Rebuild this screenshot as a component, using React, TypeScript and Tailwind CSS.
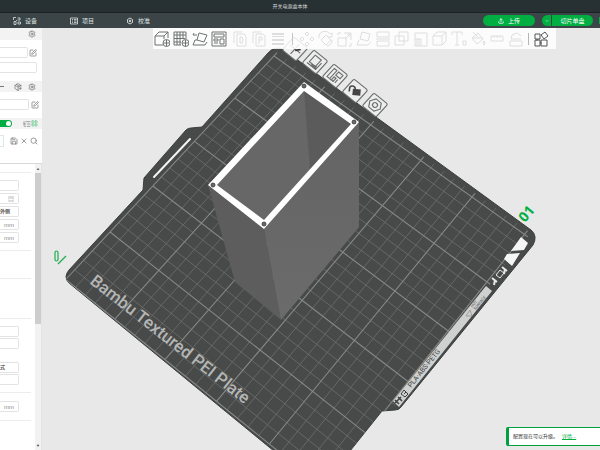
import React from "react";
import { Settings, Search, X, Save, SquarePen, ListTree, LayoutGrid, PackagePlus, Upload, ChevronDown } from "lucide-react";

const FONT = "font-['Liberation_Sans','Noto_Sans_CJK_SC',sans-serif]";

type Pt = [number, number];

// Projects plate millimetres (u along the front, v along the side) to the canvas.
// Anchors are the projected points (0,50) (150,50) (200,250) (0,250).
function solve(m: number[][]): number[] {
  const n = m.length;
  for (let i = 0; i < n; i++) {
    let p = i;
    for (let r = i; r < n; r++) if (Math.abs(m[r][i]) > Math.abs(m[p][i])) p = r;
    [m[i], m[p]] = [m[p], m[i]];
    for (let r = 0; r < n; r++) {
      if (r === i) continue;
      const f = m[r][i] / m[i][i];
      for (let c = i; c <= n; c++) m[r][c] -= f * m[i][c];
    }
  }
  return m.map((row, i) => row[n] / row[i]);
}

const anchors: [Pt, Pt][] = [
  [[0, 50], [110, 232]],
  [[150, 50], [260, 350]],
  [[200, 250], [472, 197]],
  [[0, 250], [274, 56]],
];
const H = solve(
  anchors.flatMap(([[u, v], [x, y]]) => [
    [u, v, 1, 0, 0, 0, -u * x, -v * x, x],
    [0, 0, 0, u, v, 1, -u * y, -v * y, y],
  ])
);
function project(u: number, v: number): Pt {
  const w = H[6] * u + H[7] * v + 1;
  return [(H[0] * u + H[1] * v + H[2]) / w, (H[3] * u + H[4] * v + H[5]) / w];
}
function segment(a: Pt, b: Pt) {
  const f = (p: Pt) => p.map((n) => n.toFixed(2)).join(" ");
  return `M${f(a)}L${f(b)}`;
}
const steps = Array.from({ length: 26 }, (_, i) => i * 10);
function gridPath(major: boolean) {
  return steps
    .filter((s) => (s % 50 === 0) === major)
    .map((s) => segment(project(s, 0), project(s, 254)) + segment(project(0, s), project(253, s)))
    .join("");
}

function PlateButton({ x, y, children }: { x: number; y: number; children: React.ReactNode }) {
  return (
    <g transform={`matrix(.86 .7 -.74 .8 ${x} ${y})`} fill="none" stroke="#6a6d6d" strokeWidth="1">
      <rect x="-8" y="-8" width="16" height="16" rx="1.5" fill="#ededed" />
      {children}
    </g>
  );
}

const PLATE =
  "M69 283Q63 277 69 270L143 190L144 178L186 130Q188 128 191 128L202 127L268 53Q275 45 284 50L531 230Q538 236 533 245L401 407Q399 410 395 410L382 411L346 456H280Z";

function Scene() {
  return (
    <svg
      className="absolute inset-0 h-full w-full"
      viewBox="42 28 558 422"
      preserveAspectRatio="xMinYMin slice"
      role="img"
      aria-label="Build plate"
    >
      <defs>
        <linearGradient id="right" x1="0" y1="0" x2="0" y2="1">
          <stop offset="0" stopColor="#646464" />
          <stop offset="1" stopColor="#6b6b6b" />
        </linearGradient>
        <clipPath id="plate">
          <path d={PLATE} />
        </clipPath>
      </defs>
      <path d={PLATE} fill="#484a49" stroke="#3c3e3e" strokeWidth="1" />
      <g clipPath="url(#plate)" fill="none">
        <path d={gridPath(false)} stroke="#6d706f" strokeWidth=".8" />
        <path d={gridPath(true)} stroke="#858887" strokeWidth="1.1" />
      </g>
      <path d="M154 177L190 139" stroke="#f4f4f4" strokeWidth="2" strokeLinecap="round" />

      <path d="M521 237L528 243L524 250L511 251Z" fill="#f5f5f5" />
      <path d="M507 254L520 253L512 266L504 259Z" fill="#f5f5f5" />
      <g stroke="#e8e8e8" fill="none">
        <path d="M492 278L497 282M495 280L494 285M502 267L507 271M505 269L504 274" strokeWidth="2" />
        <path d="M500 270L504 273L500 278L496 275Z" strokeWidth="1" />
      </g>
      <path d="M393 401L486 286L492 291L399 407Z" fill="#cfd1d0" />
      <path d="M395 400L399 404M398 397L402 401M395 403L401 397" stroke="#3f4141" strokeWidth="1.6" />
      <path d="M404 390L408 394L405 397L401 394ZM404 394L406 392" stroke="#3f4141" strokeWidth="1" fill="none" />
      <text
        transform="translate(411 388) rotate(-51)"
        fontSize="7"
        fill="#3d3f3f"
        fontFamily="Roboto, sans-serif"
      >
        PLA·ABS·PETG
      </text>
      <path d="M470 310L472 316L466 316Z" stroke="#8b8d8c" strokeWidth=".7" fill="none" />
      <text transform="translate(474 309) rotate(-51)" fontSize="4" fill="#555" fontFamily="Roboto, sans-serif">
        <tspan x="0" y="-2">HOT</tspan>
        <tspan x="0" y="2">SURFACE</tspan>
      </text>

      <text
        transform="translate(89 283) rotate(38)"
        fontSize="17"
        fontWeight="500"
        fill="#b4b6b5"
        fontFamily="Roboto, sans-serif"
      >
        Bambu Textured PEI Plate
      </text>

      <text
        transform="translate(525 223) rotate(-50)"
        fontSize="14"
        fontWeight="700"
        fill="#00ae42"
        fontFamily="'Open Sans', sans-serif"
      >
        01
      </text>
      <g fill="none" stroke="#1fae50" strokeWidth="1.2">
        <rect x="55" y="251" width="3" height="10" rx="1.5" />
        <path d="M58 264L66 256" />
      </g>

      <PlateButton x={295} y={49}>
        <path d="M0-6V6M-6 0H6" />
        <path d="M1 1L4-3" strokeWidth="1.6" stroke="#333" />
      </PlateButton>
      <PlateButton x={315} y={62}>
        <path d="M-4-5H3V3H-4ZM-5 5H5V-3M-1 4L4 2" />
        <path d="M0 4H5" strokeWidth="2" />
      </PlateButton>
      <PlateButton x={335} y={76}>
        <path d="M-5-5H-2V5H-5ZM0-5H5V-1H0ZM0 1H2V5H0ZM4 1V5M-2 5H0" />
      </PlateButton>
      <PlateButton x={355} y={91}>
        <g transform="rotate(-35)">
          <path d="M-5 1V-2A2.500 2.500 0 0 1 0-2V-1" strokeWidth="1.4" stroke="#444" />
          <path d="M-2-2H5V4H-2Z" fill="#444" stroke="none" />
        </g>
      </PlateButton>
      <PlateButton x={375} y={105}>
        <path d="M-3-5H3L6 0L3 5H-3L-6 0Z" />
        <circle r="2.2" />
      </PlateButton>

      <path d="M208 185L264 229L281 320L235 282Z" fill="#5d5d5d" />
      <path d="M264 229L359 122V227L281 320Z" fill="url(#right)" />
      <path d="M304 90L352 124L264 221L217 185Z" fill="#676767" />
      <path d="M304 90L352 124L310 170Z" fill="#5b5b5b" />
      <path
        fillRule="evenodd"
        fill="#fff"
        d="M304 82L359 122L264 229L208 185ZM304 91L217 185L264 220L351 124Z"
      />
      <g fill="#6a6a6a" stroke="#333" strokeWidth=".8">
        <circle cx="304" cy="86" r="2" />
        <circle cx="354" cy="122" r="2" />
        <circle cx="213" cy="185" r="2" />
        <circle cx="264" cy="224" r="2" />
      </g>
    </svg>
  );
}

const ENABLED = "text-[#6f7373]";
const DISABLED = "text-[#dedede]";

const tools: { name: string; on?: boolean; gap?: boolean; d: string }[] = [
  { name: "Add model", on: true, d: "M9 14H1V5L5 1H14V7M1 5H10V8M10 5L14 1M12.500 9V15M9.500 12H15.500M9 12A3.500 3.500 0 1 0 16 12A3.500 3.500 0 1 0 9 12" },
  { name: "Add plate", on: true, d: "M1 1H13V8M1 1V14H8M1 4H13M1 7.500H12M1 11H8M4 1V14M7 1V14M10 1V8M12.500 9V15M9.500 12H15.500M9 12A3.500 3.500 0 1 0 16 12A3.500 3.500 0 1 0 9 12" },
  { name: "Auto orient", on: true, d: "M7 2L15 4L12 11L5 9ZM1 4H5M1 4L2 2M1 14H13L15 11M1 14L3 9H5" },
  { name: "Arrange", on: true, d: "M1 1H15V15H1ZM3 3H13V6H3ZM3 8H7V10H3ZM3 12H7M9 8H13V13H9Z" },
  { name: "Split to objects", gap: true, d: "M2 12V1H10M5 3H12L14 5V15H5ZM8 6H10Q12 9 10 12H8Z" },
  { name: "Split to parts", d: "M2 12V1H10M5 3H12L14 5V15H5ZM8 13V6H11V9H8" },
  { name: "Variable layer height", d: "M2 2.500H14M2 3.500H14M2 5.500H14M2 8.500H14M2 9.500H14M2 12.500H14M2 13.500H14" },
];
const gizmos: { name: string; d: string }[] = [
  { name: "Move", d: "M8 1L10 3L8 5L6 3ZM8 11L10 13L8 15L6 13ZM1 8L3 6L5 8L3 10ZM11 8L13 6L15 8L13 10Z" },
  { name: "Rotate", d: "M1 7A6 6 0 0 1 12 3L14 2V6H10M8 4L13 9L8 14L3 9ZM14 9A6 6 0 0 1 9 15" },
  { name: "Scale", d: "M1 7H9V15H1ZM1 4V2H4M7 2H14V9M14 12V15H12M8 8L13 3M10 3H13V6" },
  { name: "Lay on face", d: "M6 1L14 3L12 10L4 8ZM1 14H12L15 11M1 14L3 9" },
  { name: "Cut", d: "M2 6V1H14V6ZM2 10V15H14V10ZM1 8H15" },
  { name: "Boolean", d: "M1 5H10V14H1ZM5 1H14V10H5Z" },
  { name: "Support paint", d: "M2 2H14V15H2ZM2 8H8V15M4 8V15M6 8V15" },
  { name: "Seam paint", d: "M1 5L5 1H14V10L10 14H1ZM1 5H10V14M10 5L14 1" },
  { name: "Text", d: "M1 4V1H11V4M6 1V14M4 14H8M12 10H15V14H12Z" },
  { name: "Colour paint", d: "M2 7L8 2L13 8L7 13ZM3 1L8 6M14 10Q16 13 14 14Q12 13 14 10M2 7H12" },
  { name: "Measure", d: "M2 5H14V10H2ZM5 5V7M8 5V7M11 5V7" },
  { name: "Assembly", d: "M2 10H14V15H2ZM3 8L4 4L9 2L13 5M3 8H13" },
];

function Tool({ name, d, className }: { name: string; d: string; className: string }) {
  return (
    <button type="button" aria-label={name} className={`h-4 w-4 shrink-0 ${className}`}>
      <svg viewBox="0 0 16 16" className="h-4 w-4" fill="none" stroke="currentColor" strokeWidth="1">
        <path d={d} />
      </svg>
    </button>
  );
}

function Toolbar() {
  return (
    <div className="relative mr-11 ml-[111px] flex h-[21px] items-center gap-[3px] bg-white/85 pl-px">
      {tools.map((t) => (
        <Tool key={t.name} name={t.name} d={t.d} className={`${t.on ? ENABLED : DISABLED} ${t.gap ? "ml-0.5" : ""}`} />
      ))}
      <span className="mx-[3px] h-3 w-px bg-[#c4c4c4]" />
      {gizmos.map((t) => (
        <Tool key={t.name} name={t.name} d={t.d} className={DISABLED} />
      ))}
      <span className="mx-px h-3 w-px bg-[#b5b5b5]" />
      <Tool
        name="Assembly view"
        className="text-[#555]"
        d="M2 3H7V8H2ZM2 9H7V15H2ZM8 9H14V15H8ZM8 4L12 1L15 5L11 8ZM4 8V10M7 12H9"
      />
    </div>
  );
}

function Header() {
  return (
    <header className="shrink-0 text-white">
      <div className="flex h-[13px] items-center justify-center border-b border-[#1d2325] bg-[#273032] pr-5 text-[5px] leading-none text-[#d5d8d8]">
        开关电源盒本体
      </div>
      <div className="flex h-[15px] items-center bg-[#3b4446] text-[6px] leading-none text-[#dfe2e2]">
        <nav className="flex items-center">
          <button type="button" className="ml-[13px] flex w-[57px] items-center gap-1">
            <svg viewBox="0 0 8 8" className="h-2 w-2" fill="none" stroke="currentColor" strokeWidth=".8">
              <path d="M.5 3V.5H3M4.500 1H7V3H4.500M1 4.500H3V7.500H1ZM5 5H7.500V7H5ZM3 3L4 4" />
            </svg>
            设备
          </button>
          <button type="button" className="flex w-14 items-center gap-1">
            <svg viewBox="0 0 8 8" className="h-2 w-2" fill="none" stroke="currentColor" strokeWidth=".8">
              <path d="M.5 1H7.500V7H.5ZM2 2.500H3M4 2.500H6.500M2 4H3M4 4H6.500M2 5.500H3M4 5.500H6.500" />
            </svg>
            项目
          </button>
          <button type="button" className="flex items-center gap-1">
            <svg viewBox="0 0 8 8" className="h-2 w-2" fill="none" stroke="currentColor" strokeWidth=".9">
              <path d="M4 1L6.500 2.500V5.500L4 7L1.500 5.500V2.500Z" />
              <circle cx="4" cy="4" r=".8" fill="currentColor" />
            </svg>
            校准
          </button>
        </nav>
        <div className="ml-auto flex items-center gap-[7px] text-white">
          <button type="button" className="flex h-[11px] w-[52px] items-center justify-center gap-1 rounded-full bg-[#00ae42]">
            <Upload className="h-1.5 w-1.5" strokeWidth={3} />
            上传
          </button>
          <div className="flex h-[11px] items-center">
            <button type="button" aria-label="Slice options" className="flex h-full w-[9px] items-center justify-center rounded-l-full bg-[#00ae42]">
              <ChevronDown className="h-1 w-1" strokeWidth={3} />
            </button>
            <button type="button" className="ml-px h-full w-[41px] rounded-r-full bg-[#00ae42]">
              切片单盘
            </button>
          </div>
          <span className="-ml-px h-[7px] w-px bg-[#00ae42]" />
        </div>
      </div>
    </header>
  );
}

function Field({ value = "", label, width = "w-[19px]" }: { value?: string; label: string; width?: string }) {
  return (
    <input
      aria-label={label}
      defaultValue={value}
      className={`block h-[11px] rounded-r-xs border border-l-0 border-[#e3e3e3] bg-white pr-1 text-right text-[6px] leading-none text-[#888] ${width}`}
    />
  );
}

const ICON = "h-2 w-2 shrink-0 text-[#6b6b6b]";

function Sidebar() {
  return (
    <aside className="flex w-[42px] shrink-0 flex-col overflow-hidden bg-white">
      <div className="flex h-3 shrink-0 items-center justify-end bg-[#f3f3f3] pr-1.5">
        <Settings className={ICON} />
      </div>
      <div className="flex shrink-0 flex-col gap-1 pt-[7px] pb-2">
        <div className="flex items-center gap-px">
          <Field label="Printer" width="w-7" />
          <SquarePen className={ICON} />
        </div>
        <Field label="Plate type" width="w-[37px]" />
      </div>
      <div className="flex h-[11px] shrink-0 items-center justify-end gap-1.5 bg-[#f3f3f3] pr-1.5">
        <span className="mr-auto h-px w-1 bg-[#777]" />
        <PackagePlus className={ICON} />
        <Settings className={ICON} />
      </div>
      <div className="flex shrink-0 items-center gap-0.5 pt-[7px] pb-2">
        <Field label="Filament" width="w-[29px]" />
        <SquarePen className={ICON} />
      </div>
      <div className="flex h-[11px] shrink-0 items-center bg-[#f3f3f3]">
        <button type="button" role="switch" aria-checked="true" aria-label="Advanced" className="flex h-[7px] w-3 items-center justify-end rounded-r-full bg-[#00ae42] pr-px">
          <span className="h-[5px] w-[5px] rounded-full bg-white" />
        </button>
        <ListTree className="ml-[11px] h-2 w-2 shrink-0 text-[#777]" />
        <LayoutGrid className="h-[7px] w-[7px] shrink-0 text-[#4cc27c]" />
      </div>
      <div className="flex h-[35px] shrink-0 items-start border-b border-[#d8d8d8] pt-1.5">
        <span className="h-3 w-1 border border-l-0 border-[#dcebe2]" />
        <div className="ml-1.5 flex h-3 items-center gap-0.5">
          <Save className={ICON} />
          <X className={ICON} />
          <Search className={ICON} />
        </div>
      </div>
      <div className="flex min-h-0 flex-1">
        <div className="flex min-w-0 flex-1 flex-col overflow-hidden">
          <div className="mr-1 border-b border-[#ececec] pt-2" />
          <div className="mr-1 flex flex-col gap-[2px] border-b border-[#ececec] pt-[7px] pb-[7px]">
            <Field label="Layer height" />
            <Field label="Pattern" value="▤" />
            <div className="flex h-[11px] w-[19px] items-center rounded-r-xs border border-l-0 border-[#e3e3e3] text-[5px] leading-none font-bold whitespace-nowrap text-[#555]">
              外侧
            </div>
            <Field label="Gap" value="mm" />
            <Field label="Width" value="mm" />
          </div>
          <div className="mr-1 h-7 shrink-0 border-b border-[#ececec]" />
          <div className="mr-1 h-10 shrink-0 border-b border-[#ececec]" />
          <div className="mr-1 flex flex-col gap-px border-b border-[#ececec] pt-[7px] pb-[7px]">
            <Field label="Walls" />
            <Field label="Shells" />
            <div className="mt-3 flex h-[11px] w-[19px] items-center rounded-r-xs border border-l-0 border-[#e3e3e3] text-[5px] leading-none font-bold text-[#555]">
              式
            </div>
            <Field label="Density" />
          </div>
          <div className="mr-1 border-b border-[#ececec] pt-2 pb-2">
            <Field label="Offset" value="mm" />
          </div>
        </div>
        <div className="flex w-[7px] shrink-0 flex-col items-center border-r border-[#e4e4e4] bg-[#f2f2f2]">
          <span className="flex h-[9px] items-center text-[4px] leading-none text-[#555]">▲</span>
          <span className="w-full flex-[151] bg-[#cdcdcd]" />
          <span className="flex-[118]" />
          <span className="flex h-2 items-center text-[4px] leading-none text-[#444]">▼</span>
        </div>
      </div>
    </aside>
  );
}

export default function App() {
  return (
    <div className={`flex h-screen flex-col overflow-hidden bg-[#e8e8e8] ${FONT}`}>
      <Header />
      <div className="flex min-h-0 flex-1">
        <Sidebar />
        <main className="relative flex min-w-0 flex-1 flex-col justify-between bg-[#e8e8e8]">
          <Scene />
          <Toolbar />
          <div
            role="status"
            className="relative mb-1 flex h-[19px] w-[94px] items-center gap-1 self-end rounded-l-xs border border-r-0 border-l-[3px] border-[#00a040] bg-white pl-1 text-[5px] leading-none whitespace-nowrap text-[#333]"
          >
            <span>配置现在可以升级。</span>
            <a href="#details" className="text-[#00ae42] underline">
              详情...
            </a>
          </div>
        </main>
      </div>
    </div>
  );
}
